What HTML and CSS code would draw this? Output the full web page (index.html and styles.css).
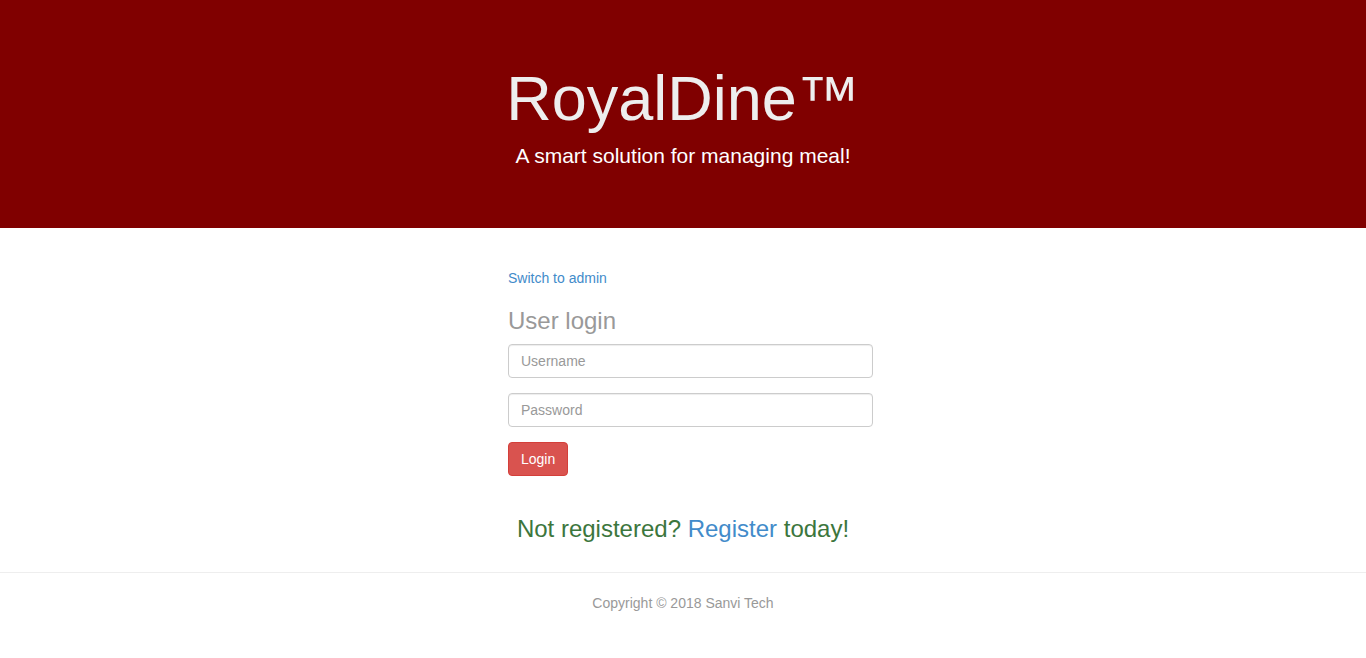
FILE: index.html
```html
<!DOCTYPE html>
<html lang="en">
<head>
<meta charset="utf-8">
<title>RoyalDine</title>
<link rel="stylesheet" href="styles.css">
</head>
<body>
<header class="hero">
  <h1 class="hero-title">RoyalDine™</h1>
  <p class="hero-sub">A smart solution for managing meal!</p>
</header>
<main class="main">
  <div class="login">
    <a class="switch" href="#">Switch to admin</a>
    <h3 class="login-title">User login</h3>
    <form class="form">
      <div class="form-group"><input class="input" type="text" placeholder="Username"></div>
      <div class="form-group"><input class="input" type="password" placeholder="Password"></div>
      <button class="btn" type="button">Login</button>
    </form>
  </div>
</main>
<h3 class="register">Not registered? <a href="#">Register</a> today!</h3>
<footer class="footer">
  <p class="copy">Copyright © 2018 Sanvi Tech</p>
</footer>
</body>
</html>
```
FILE: styles.css
```css
* { box-sizing: border-box; }
html, body { margin: 0; padding: 0; }
body {
  font-family: "Liberation Sans", Arial, sans-serif;
  font-size: 14px;
  line-height: 20px;
  color: #333;
  background: #fff;
}
a { color: #428bca; text-decoration: none; }

.hero {
  background: #800000;
  height: 228px;
  padding-top: 64px;
  text-align: center;
}
.hero-title {
  margin: 0 0 8px;
  font-size: 63px;
  line-height: 69px;
  font-weight: 400;
  color: #eeeeee;
}
.hero-sub {
  margin: 0;
  font-size: 21px;
  line-height: 30px;
  color: #fff;
}

.main {
  display: flex;
  justify-content: center;
  padding-top: 40px;
}
.login {
  width: 365px;
  margin-left: 15px;
}
.switch { display: block; }
.login-title {
  margin: 20px 0 10px;
  font-size: 24px;
  line-height: 26px;
  font-weight: 400;
  color: #999;
}
.form-group { margin-bottom: 15px; }
.input {
  display: block;
  width: 100%;
  height: 34px;
  padding: 6px 12px;
  font-family: inherit;
  font-size: 14px;
  color: #555;
  background: #fff;
  border: 1px solid #ccc;
  border-radius: 4px;
  box-shadow: inset 0 1px 1px rgba(0,0,0,.075);
}
.input::placeholder { color: #999; }
.btn {
  height: 34px;
  padding: 6px 12px;
  font-family: inherit;
  font-size: 14px;
  line-height: 20px;
  color: #fff;
  background: #d9534f;
  border: 1px solid #d43f3a;
  border-radius: 4px;
}

.register {
  margin: 40px 0 0;
  text-align: center;
  font-size: 24px;
  line-height: 26px;
  font-weight: 400;
  color: #3c763d;
}
.footer {
  margin-top: 30px;
  border-top: 1px solid #eee;
  padding-top: 20px;
  text-align: center;
}
.copy { margin: 0; color: #999; }
```
